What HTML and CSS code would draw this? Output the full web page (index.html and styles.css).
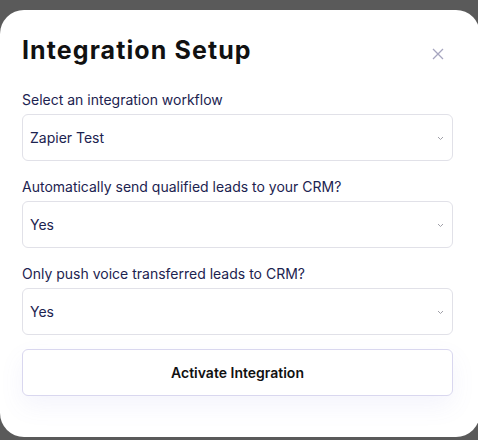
FILE: index.html
```html
<!DOCTYPE html>
<html>
<head>
<meta charset="utf-8">
<link rel="stylesheet" href="styles.css">
</head>
<body>
<div class="modal">
  <div class="header">
    <h1 class="title">Integration Setup</h1>
    <button class="close" aria-label="Close">
      <svg width="12" height="12" viewBox="0 0 12 12"><path d="M1 1L11 11M11 1L1 11" stroke="#a6a5bf" stroke-width="1.3" fill="none"/></svg>
    </button>
  </div>
  <div class="field">
    <label class="label">Select an integration workflow</label>
    <div class="select"><span>Zapier Test</span><svg class="chev" width="7" height="5" viewBox="0 0 7 5"><path d="M1 1L3.5 3.5L6 1" stroke="#a0a0a8" stroke-width="1" fill="none"/></svg></div>
  </div>
  <div class="field">
    <label class="label">Automatically send qualified leads to your CRM?</label>
    <div class="select"><span>Yes</span><svg class="chev" width="7" height="5" viewBox="0 0 7 5"><path d="M1 1L3.5 3.5L6 1" stroke="#a0a0a8" stroke-width="1" fill="none"/></svg></div>
  </div>
  <div class="field">
    <label class="label">Only push voice transferred leads to CRM?</label>
    <div class="select"><span>Yes</span><svg class="chev" width="7" height="5" viewBox="0 0 7 5"><path d="M1 1L3.5 3.5L6 1" stroke="#a0a0a8" stroke-width="1" fill="none"/></svg></div>
  </div>
  <button class="activate">Activate Integration</button>
</div>
</body>
</html>
```
FILE: styles.css
```css
html, body {
  margin: 0;
  padding: 0;
  background: #5a5a5a;
  height: 440px;
  overflow: hidden;
}
body {
  font-family: Inter, "Liberation Sans", sans-serif;
}
.modal {
  box-sizing: border-box;
  margin-top: 10px;
  width: 480px;
  height: 427px;
  background: #fff;
  border-radius: 24px;
  padding: 24px 27px 0 22px;
}
.header {
  display: flex;
  align-items: center;
  justify-content: space-between;
  height: 32px;
  margin-bottom: 24px;
}
.title {
  margin: 0;
  font-size: 25px;
  line-height: 32px;
  font-weight: 700;
  color: #111111;
  letter-spacing: 1.1px;
}
.close {
  border: 0;
  background: none;
  padding: 0;
  width: 12px;
  height: 12px;
  margin-right: 9px;
  margin-top: 8px;
  display: flex;
}
.field {
  display: flex;
  flex-direction: column;
  gap: 4px;
  margin-bottom: 16px;
}
.label {
  font-size: 14px;
  line-height: 20px;
  color: #1c2350;
}
.select {
  box-sizing: border-box;
  height: 47px;
  border: 1px solid #e1e1e8;
  border-radius: 6px;
  display: flex;
  align-items: center;
  justify-content: space-between;
  padding: 0 8px 0 7px;
  font-size: 14px;
  color: #1c2350;
}
.chev {
  margin-top: 1px;
}
.activate {
  box-sizing: border-box;
  display: block;
  width: 100%;
  height: 47px;
  margin-top: -2px;
  border: 1px solid #d9d7ef;
  border-radius: 6px;
  background: #fff;
  font-family: Inter, "Liberation Sans", sans-serif;
  font-size: 14px;
  font-weight: 600;
  color: #111111;
  box-shadow: 0 10px 24px rgba(120, 110, 220, 0.08);
}
```
